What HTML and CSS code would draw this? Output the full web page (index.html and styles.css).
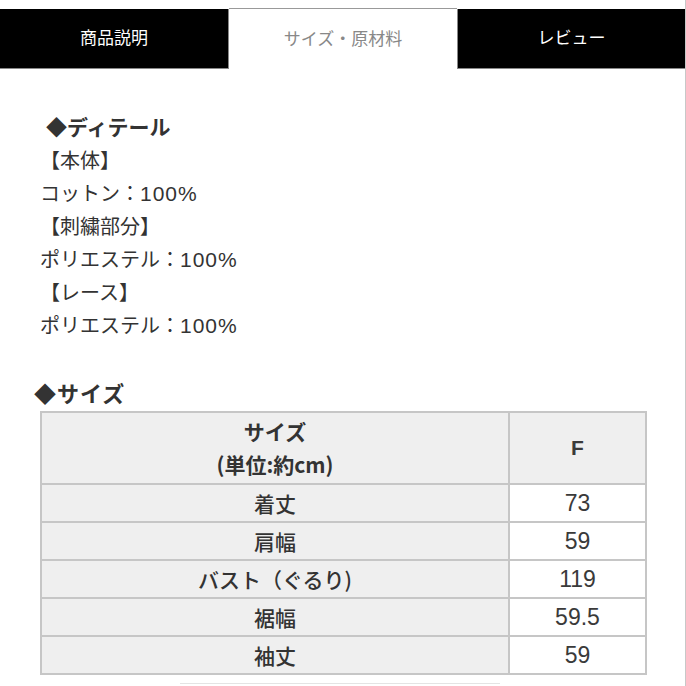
FILE: index.html
```html
<!DOCTYPE html>
<html lang="ja">
<head>
<meta charset="utf-8">
<link rel="stylesheet" href="styles.css">
</head>
<body>
<div class="page">
  <nav class="tabs">
    <div class="tab tab-dark">商品説明</div>
    <div class="tab tab-active">サイズ・原材料</div>
    <div class="tab tab-dark tab-last">レビュー</div>
  </nav>
  <section class="content">
    <p class="heading heading-detail">◆ディテール</p>
    <p class="line">【本体】</p>
    <p class="line">コットン：<span class="num">100%</span></p>
    <p class="line">【刺繍部分】</p>
    <p class="line">ポリエステル：<span class="num">100%</span></p>
    <p class="line">【レース】</p>
    <p class="line">ポリエステル：<span class="num">100%</span></p>
    <p class="heading heading-size">◆サイズ</p>
    <table class="size-table">
      <tr class="head-row">
        <th class="label head-label">サイズ<br>(単位:約cm)</th>
        <th class="val head-val">F</th>
      </tr>
      <tr><th class="label">着丈</th><td class="val">73</td></tr>
      <tr><th class="label">肩幅</th><td class="val">59</td></tr>
      <tr><th class="label">バスト（ぐるり)</th><td class="val">119</td></tr>
      <tr><th class="label">裾幅</th><td class="val">59.5</td></tr>
      <tr><th class="label">袖丈</th><td class="val">59</td></tr>
    </table>
    <div class="next-box"></div>
  </section>
</div>
</body>
</html>
```
FILE: styles.css
```css
html, body {
  margin: 0;
  padding: 0;
  background: #fff;
}
body {
  font-family: "Noto Sans CJK JP", "Noto Sans", sans-serif;
  color: #333;
}
.page {
  width: 686px;
  height: 686px;
  overflow: hidden;
  box-sizing: border-box;
  border-right: 1px solid #c8c8c8;
}
.tabs {
  display: flex;
  margin-top: 8px;
  height: 61px;
}
.tab {
  flex: 0 0 229px;
  box-sizing: border-box;
  display: flex;
  align-items: center;
  justify-content: center;
  font-size: 17px;
  padding-bottom: 5px;
}
.tab-dark {
  background: #000;
  color: #fff;
  border-bottom: 1px solid #888;
  margin-top: 1px;
}
.tab-dark:first-child {
  border-right: 1px solid #888;
}
.tab-active {
  flex-basis: 228px;
  background: #fff;
  color: #888;
  border-top: 1px solid #999;
  padding-top: 2px;
}
.tab-last {
  flex-basis: 228px;
  border-left: 1px solid #888;
}
.content {
  padding: 41px 0 0 40px;
}
.content p {
  margin: 0;
  font-size: 20px;
  line-height: 33px;
  height: 33px;
  white-space: nowrap;
}
.num {
  font-family: "Liberation Sans", "Noto Sans", sans-serif;
  font-size: 21px;
  letter-spacing: 1px;
}
.heading {
  font-weight: bold;
}
.heading-detail {
  padding-left: 6px;
  font-size: 21px !important;
}
.heading-size {
  margin-top: 35px !important;
  margin-left: -6px !important;
  font-size: 22px !important;
  letter-spacing: 1px;
}
.size-table {
  margin-top: 2px;
  width: 607px;
  border-collapse: collapse;
  font-size: 21px;
  color: #333;
}
.size-table th,
.size-table td {
  border: 2px solid #c6c6c6;
  text-align: center;
  padding: 0;
  height: 36px;
  line-height: 24px;
}
.size-table .label {
  width: 466px;
  background: #efefef;
  font-weight: 500;
}
.size-table .val {
  background: #fff;
  font-weight: 400;
  font-family: "Liberation Sans", "Noto Sans CJK JP", sans-serif;
  font-size: 23px;
  color: #3a3a3a;
}
.size-table .head-label {
  height: 70px;
  line-height: 33px;
  font-weight: bold;
}
.size-table .head-val {
  background: #efefef;
  font-weight: bold;
  font-size: 21px;
}
.next-box {
  margin: 8px 0 0 140px;
  width: 320px;
  height: 20px;
  border-top: 1px solid #e4e4e4;
}
```
